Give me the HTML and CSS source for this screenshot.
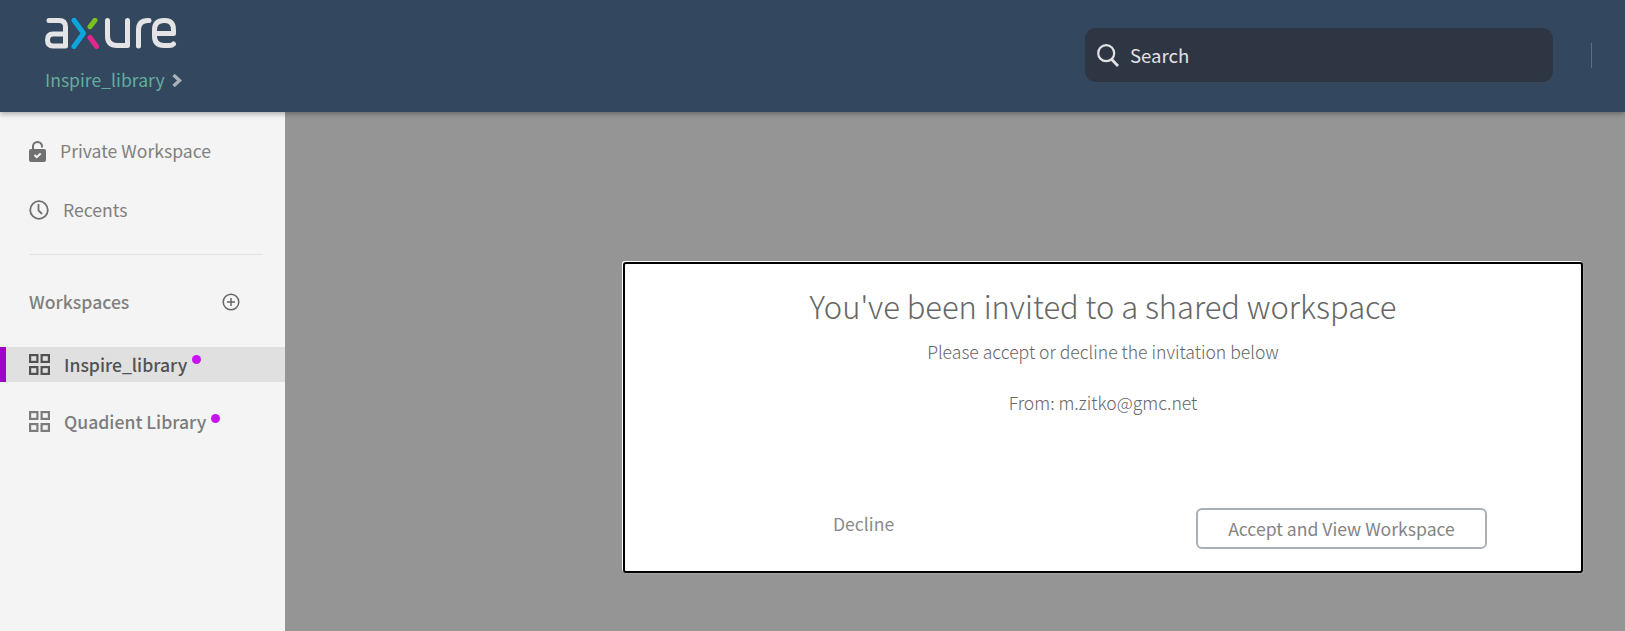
FILE: index.html
```html
<!DOCTYPE html>
<html lang="en">
<head>
    <meta charset="UTF-8">
    <title>Axure Cloud</title>
    <link rel="stylesheet" href="styles.css">
</head>
<body>
    <header class="topbar">
        <div class="brand">
            <svg class="logo" width="132" height="31" viewBox="0 0 132 31" fill="none" stroke-width="5" stroke-linecap="round" stroke-linejoin="round">
                <path stroke="#e4e4e6" d="M4 2.500h10q6.500 0 6.500 6.500v19H8q-5.500 0-5.500-6t5.500-6h12.500"/>
                <path stroke="#0ea5df" d="M29 2.200l9.500 13.100-9.500 13.200"/>
                <path stroke="#7cc01e" d="M50 2.200l-5 6.500"/>
                <path stroke="#e5258f" d="M45 19.500l6.500 9"/>
                <path stroke="#e4e4e6" d="M62.500 2.500V18q0 9.500 9.500 9.500h10.500V2.500"/>
                <path stroke="#e4e4e6" d="M93.500 28V12q0-9.500 9.500-9.500h1"/>
                <path stroke="#e4e4e6" d="M128.500 26q-1.500 1.500-4 1.500H119q-9.500 0-9.500-9.500v-6q0-9.500 9.500-9.500h1q8.500 0 8.500 9.500v3.500h-18"/>
            </svg>
            <div class="crumb">
                <span>Inspire_library</span>
                <svg width="10" height="13" viewBox="0 0 10 13" fill="none" stroke="#a9b1bb" stroke-width="3.400"><path d="M1.500 1l6 5.500-6 5.500"/></svg>
            </div>
        </div>
        <div class="search">
            <svg width="22" height="23" viewBox="0 0 22 23" fill="none" stroke="#e2e2e4" stroke-width="2.200"><circle cx="9.200" cy="9.200" r="8"/><path d="M14.800 15.500l6.200 6.500" stroke-width="2.800"/></svg>
            <span class="search-label">Search</span>
        </div>
        <div class="top-divider"></div>
    </header>

    <div class="content">
        <nav class="sidebar">
            <a class="nav-link nav-private">
                <svg width="17" height="21" viewBox="0 0 17 21" fill="#707070"><path d="M4 9V5.500a4.500 4.500 0 0 1 9 0v1" fill="none" stroke="#707070" stroke-width="2"/><path d="M2 8h13q2 0 2 2v9q0 2-2 2H2q-2 0-2-2v-9q0-2 2-2z"/><path d="M5.500 14l2.200 2.200 4-3.700" fill="none" stroke="#f4f4f4" stroke-width="2"/></svg>
                <span>Private Workspace</span>
            </a>
            <a class="nav-link nav-recents">
                <svg width="20" height="20" viewBox="0 0 20 20" fill="none" stroke="#707070" stroke-width="1.800"><circle cx="10" cy="10" r="8.800"/><path d="M9.500 4v6.500l3.500 3.500"/></svg>
                <span>Recents</span>
            </a>
            <div class="side-divider"></div>
            <div class="ws-head">
                <span>Workspaces</span>
                <svg width="18" height="18" viewBox="0 0 18 18" fill="none" stroke="#666" stroke-width="1.500"><circle cx="9" cy="9" r="7.800"/><path d="M9 5v8M5 9h8"/></svg>
            </div>
            <a class="ws-row ws-active">
                <svg class="grid-icon" width="21" height="21" viewBox="0 0 21 21" fill="none" stroke="currentColor" stroke-width="2.200"><rect x="1.100" y="1.100" width="7.300" height="6.800"/><rect x="12.600" y="1.100" width="7.300" height="6.800"/><rect x="1.100" y="13.100" width="7.300" height="6.800"/><rect x="12.600" y="13.100" width="7.300" height="6.800"/></svg>
                <span>Inspire_library</span>
                <i class="dot"></i>
            </a>
            <a class="ws-row">
                <svg class="grid-icon" width="21" height="21" viewBox="0 0 21 21" fill="none" stroke="currentColor" stroke-width="2.200"><rect x="1.100" y="1.100" width="7.300" height="6.800"/><rect x="12.600" y="1.100" width="7.300" height="6.800"/><rect x="1.100" y="13.100" width="7.300" height="6.800"/><rect x="12.600" y="13.100" width="7.300" height="6.800"/></svg>
                <span>Quadient Library</span>
                <i class="dot"></i>
            </a>
        </nav>

        <main class="overlay">
            <section class="dialog">
                <h2>You've been invited to a shared workspace</h2>
                <p class="dialog-sub">Please accept or decline the invitation below</p>
                <p class="dialog-from">From: m.zitko@gmc.net</p>
                <div class="dialog-actions">
                    <a class="decline">Decline</a>
                    <button class="accept">Accept and View Workspace</button>
                </div>
            </section>
        </main>
    </div>
</body>
</html>
```

FILE: styles.css
```css
* {
    box-sizing: border-box;
}

html, body {
    height: 100%;
}

body {
    margin: 0;
    overflow: hidden;
    display: flex;
    flex-direction: column;
    font-family: "Noto Sans CJK SC", "Source Sans Pro", "Open Sans", sans-serif;
    font-size: 17.6px;
    background: #959595;
}

.topbar {
    position: relative;
    z-index: 2;
    flex: 0 0 112px;
    display: flex;
    align-items: flex-start;
    background: #33475f;
    box-shadow: 0 2px 5px rgba(0,0,0,0.3);
}

.brand {
    width: 1085px;
    padding: 18px 0 0 45px;
}

.logo {
    display: block;
}

.crumb {
    display: flex;
    align-items: center;
    gap: 7px;
    margin-top: 18px;
    color: #64ad9d;
    line-height: 26px;
}

.search {
    width: 468px;
    height: 54px;
    margin-top: 28px;
    padding-left: 12px;
    display: flex;
    align-items: center;
    gap: 11px;
    background: #2e3543;
    border-radius: 11px;
    color: #e2e2e4;
    font-size: 18.6px;
}

.search-label {
    padding-bottom: 2px;
}

.top-divider {
    width: 1px;
    height: 25px;
    margin: 43px 0 0 38px;
    background: #5f6e80;
}

.content {
    flex: 1;
    display: flex;
    min-height: 0;
}

.sidebar {
    flex: 0 0 285px;
    background: #f4f4f4;
    color: #808080;
}

.nav-link {
    display: flex;
    align-items: center;
    padding-left: 29px;
    line-height: 26px;
}

.nav-private {
    margin-top: 26px;
    gap: 14px;
}

.nav-recents {
    margin-top: 33px;
    gap: 14px;
}

.side-divider {
    width: 234px;
    height: 1px;
    margin: 31px 0 0 29px;
    background: #e2e2e2;
}

.ws-head {
    display: flex;
    align-items: center;
    justify-content: space-between;
    width: 211px;
    margin: 34px 0 0 29px;
    font-weight: 500;
    line-height: 26px;
}

.ws-row {
    display: flex;
    align-items: center;
    height: 35px;
    padding-left: 29px;
    font-weight: 500;
    color: #7c7c7c;
}

.ws-head + .ws-row {
    margin-top: 32px;
}

.ws-row + .ws-row {
    margin-top: 22px;
}

.ws-active {
    color: #525252;
    background: #e0e0e0;
    box-shadow: inset 6px 0 0 #a000cc;
}

.grid-icon {
    margin-right: 14px;
}

.dot {
    width: 9px;
    height: 9px;
    margin: -10px 0 0 5px;
    border-radius: 50%;
    background: #c813f5;
}

.ws-row + .ws-row .dot {
    margin-top: -7px;
}

.overlay {
    flex: 1;
    padding: 150px 0 0 338px;
}

.dialog {
    width: 960px;
    height: 311px;
    padding-top: 19px;
    background: #fff;
    border: 2px solid #000;
    border-radius: 3px;
    box-shadow: -1px -1px 0 #fff, 1px 1px 0 rgba(255,255,255,0.15);
    text-align: center;
    color: #666;
}

.dialog h2 {
    margin: 0;
    font-size: 30.9px;
    font-weight: 300;
    line-height: 46px;
}

.dialog-sub {
    margin: 10px 0 0;
    font-weight: 300;
    line-height: 26px;
}

.dialog-from {
    margin: 25px 0 0;
    font-weight: 300;
    line-height: 26px;
}

.dialog-actions {
    display: flex;
    align-items: flex-start;
    margin: 92px 0 0 208px;
}

.decline {
    width: 363px;
    margin-top: 3px;
    text-align: left;
    color: #8a8a8a;
    line-height: 26px;
}

.accept {
    width: 291px;
    height: 41px;
    background: #fff;
    border: 2px solid #aab0b8;
    border-radius: 6px;
    font: inherit;
    color: #848484;
}
```
